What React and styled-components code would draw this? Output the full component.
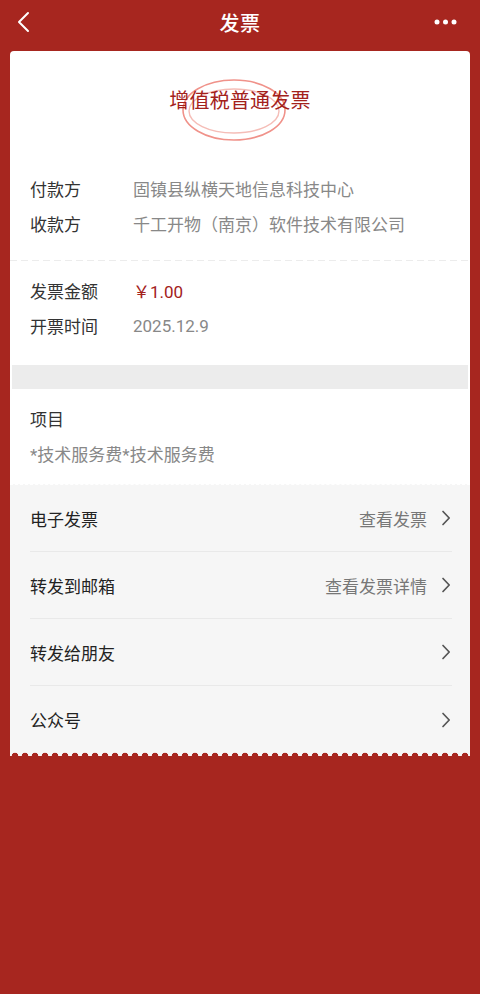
import React from "react"
import styled, { createGlobalStyle } from "styled-components"

const RED = "#a7261f"

const GlobalStyle = createGlobalStyle`
  body {
    margin: 0;
    background: ${RED};
    font-family: Roboto, "Noto Sans CJK SC", sans-serif;
  }
`

const Page = styled.div`
  min-height: 994px;
  background: ${RED};
  display: flex;
  flex-direction: column;
`

/// ============== Top nav ================ ///
const NavBar = styled.header`
  height: 44px;
  display: grid;
  grid-template-columns: 60px 1fr 60px;
  align-items: center;
  color: #fff;
  h1 {
    margin: 0;
    text-align: center;
    font-size: 20px;
    font-weight: 500;
    letter-spacing: 0.5px;
  }
`

const NavButton = styled.div`
  display: flex;
  align-items: center;
  justify-content: ${p => (p.right ? "flex-end" : "flex-start")};
  padding: ${p => (p.right ? "0 22px 0 0" : "0 0 0 16px")};
  height: 44px;
`

const Card = styled.main`
  margin: 7px 10px 0;
  background: #fff;
  border-radius: 4px 4px 0 0;
  overflow: hidden;
`

const TitleBlock = styled.div`
  height: 120px;
  display: flex;
  justify-content: center;
  padding-top: 26px;
  box-sizing: border-box;
`

const Stamp = styled.div`
  position: relative;
  height: 50px;
  svg {
    position: absolute;
    left: 12px;
    top: 1px;
  }
  span {
    position: relative;
    display: block;
    font-size: 20px;
    line-height: 48px;
    color: #a3211b;
    letter-spacing: 0.2px;
  }
`

const Section = styled.section`
  padding: ${p => p.pad || "0"};
`

const Dashes = styled.div`
  height: 1px;
  background: repeating-linear-gradient(to right, #ececec 0 7px, transparent 7px 11px);
`

const Row = styled.div`
  display: flex;
  height: 35px;
  align-items: center;
  padding: 0 20px;
  font-size: 17px;
  .label {
    width: 103px;
    color: #333;
  }
  .value {
    color: ${p => (p.accent ? "#a3211b" : "#888")};
  }
`

const ItemText = styled.div`
  height: 35px;
  line-height: 35px;
  padding: 0 20px;
  font-size: 17px;
  color: ${p => (p.muted ? "#888" : "#333")};
`

const Band = styled.div`
  height: 24px;
  margin: 0 2px;
  background: #ececec;
`

const ActionList = styled.div`
  background: #f6f6f6;
  border-top: 1px dashed #fff;
  position: relative;
  padding-bottom: 3px;
  &::after {
    content: "";
    position: absolute;
    left: 0;
    right: 0;
    bottom: 0;
    height: 4px;
    background: radial-gradient(circle at 5px 4px, ${RED} 3px, transparent 3.6px) repeat-x;
    background-size: 10px 4px;
  }
`

const ActionRow = styled.div`
  height: 67px;
  margin: 0 18px 0 20px;
  padding-right: 1px;
  display: flex;
  align-items: center;
  border-bottom: ${p => (p.last ? "none" : "1px solid #e9e9e9")};
  box-sizing: border-box;
  font-size: 17px;
  color: #222;
  .title {
    flex: 1;
  }
  .hint {
    color: #777;
    margin-right: 14px;
  }
`

const Chevron = () => (
  <svg width="10" height="16" viewBox="0 0 10 16">
    <path d="M2 1.5 L8.2 8 L2 14.5" fill="none" stroke="#555" strokeWidth="1.7" strokeLinecap="round" strokeLinejoin="round" />
  </svg>
)

const actions = [
  { title: "电子发票", hint: "查看发票" },
  { title: "转发到邮箱", hint: "查看发票详情" },
  { title: "转发给朋友" },
  { title: "公众号" },
]

export default function App() {
  return (
    <Page>
      <GlobalStyle />
      <NavBar>
        <NavButton>
          <svg width="16" height="22" viewBox="0 0 16 22">
            <path d="M12 2 L3 11 L12 20" fill="none" stroke="#fff" strokeWidth="2" strokeLinecap="round" strokeLinejoin="round" />
          </svg>
        </NavButton>
        <h1>发票</h1>
        <NavButton right>
          <svg width="24" height="6" viewBox="0 0 24 6">
            <circle cx="3" cy="3" r="2.5" fill="#fff" />
            <circle cx="11.5" cy="3" r="2.5" fill="#fff" />
            <circle cx="20" cy="3" r="2.5" fill="#fff" />
          </svg>
        </NavButton>
      </NavBar>

      <Card>
        <TitleBlock>
          <Stamp>
            <svg width="108" height="64" viewBox="0 0 108 64">
              <ellipse cx="53" cy="32" rx="51" ry="30" fill="none" stroke="#f0928a" strokeWidth="1.6" />
              <ellipse cx="53" cy="33" rx="45" ry="22" fill="none" stroke="#f5bdb7" strokeWidth="1.4" />
            </svg>
            <span>增值税普通发票</span>
          </Stamp>
        </TitleBlock>

        <Section pad="0 0 19px">
          <Row><span className="label">付款方</span><span className="value">固镇县纵横天地信息科技中心</span></Row>
          <Row><span className="label">收款方</span><span className="value">千工开物（南京）软件技术有限公司</span></Row>
        </Section>
        <Dashes />
        <Section pad="12px 0 22px">
          <Row accent><span className="label">发票金额</span><span className="value">￥1.00</span></Row>
          <Row><span className="label">开票时间</span><span className="value">2025.12.9</span></Row>
        </Section>
        <Band />
        <Section pad="14px 0 11px">
          <ItemText>项目</ItemText>
          <ItemText muted>*技术服务费*技术服务费</ItemText>
        </Section>

        <ActionList>
          {actions.map((a, i) => (
            <ActionRow key={a.title} last={i === actions.length - 1}>
              <span className="title">{a.title}</span>
              {a.hint && <span className="hint">{a.hint}</span>}
              <Chevron />
            </ActionRow>
          ))}
        </ActionList>
      </Card>
    </Page>
  )
}
